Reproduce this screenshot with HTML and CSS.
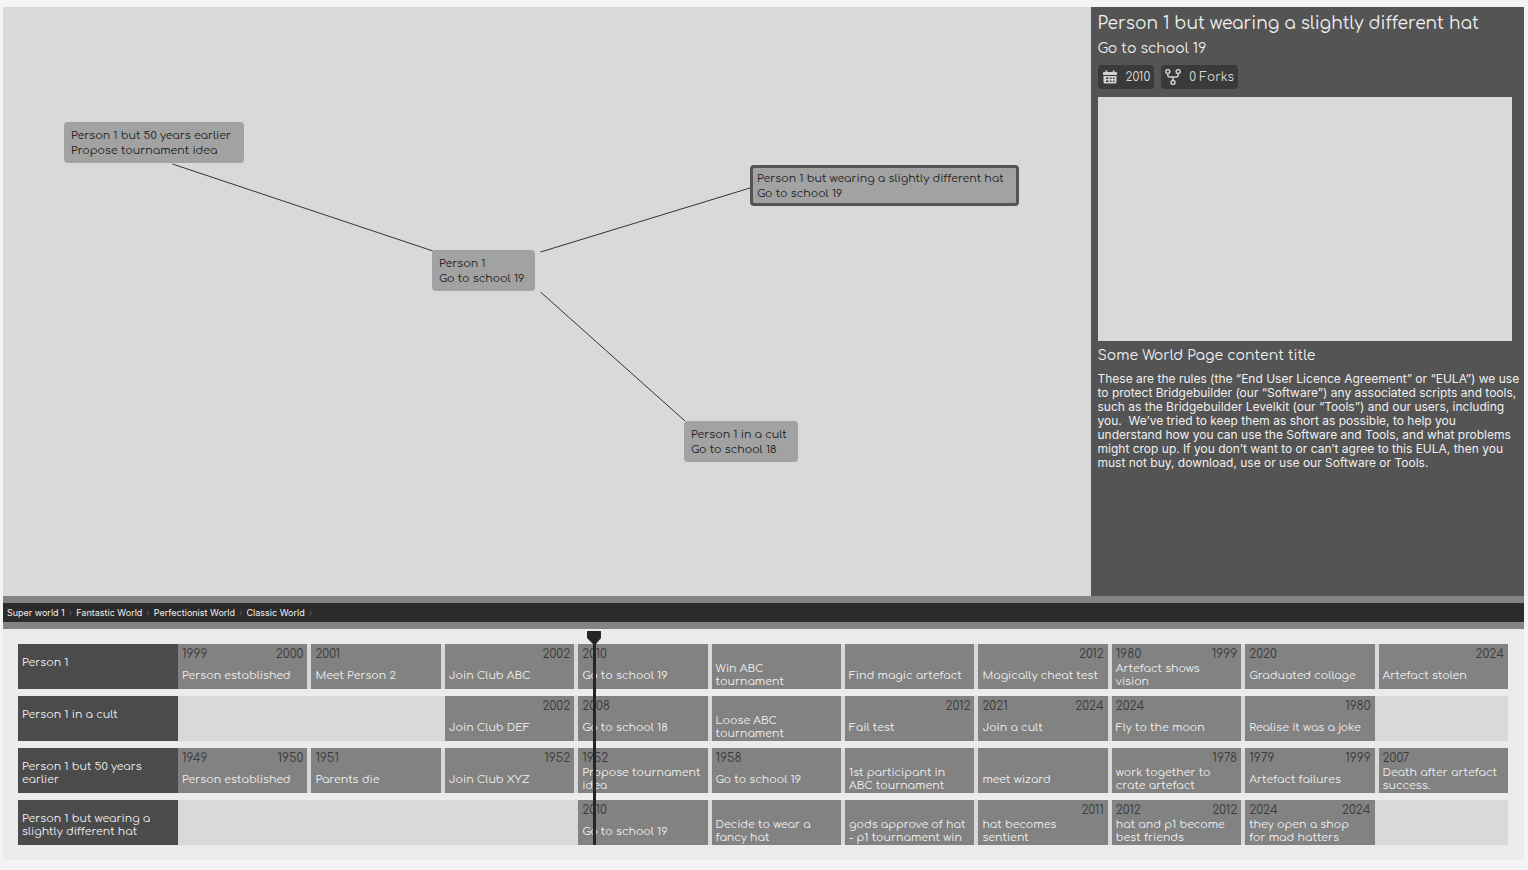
FILE: index.html
```html
<!DOCTYPE html>
<html lang="en">
<head>
<meta charset="utf-8">
<title>World timelines</title>
<link rel="stylesheet" href="styles.css">
</head>
<body>
<div class="app">
  <div class="workspace">
    <main class="canvas">
      <svg class="edges" aria-hidden="true">
        <path d="M169.500 157 430 244M537.500 245 747 181M537.500 285 682 414"/>
      </svg>
      <button class="node node-earlier">Person 1 but 50 years earlier<br>Propose tournament idea</button>
      <button class="node node-main">Person 1<br>Go to school 19</button>
      <button class="node node-hat selected">Person 1 but wearing a slightly different hat<br>Go to school 19</button>
      <button class="node node-cult">Person 1 in a cult<br>Go to school 18</button>
    </main>
    <aside class="panel">
      <h1 class="panel-title">Person 1 but wearing a slightly different hat</h1>
      <p class="panel-event">Go to school 19</p>
      <div class="badges">
        <span class="badge">
          <svg class="icon" viewBox="0 0 16 16" aria-hidden="true">
            <path d="M1 6V4Q1 3 2 3H3.500V1.500H5.200V3H10.800V1.500H12.500V3H14Q15 3 15 4V6Z" fill="#d0d0d0"/>
            <path fill-rule="evenodd" d="M1.500 7H14.500V13Q14.500 14.500 13 14.500H3Q1.500 14.500 1.500 13ZM4 8.500V10H6.500V8.500ZM8 8.500V10H9.500V8.500ZM11 8.500V10H12.500V8.500ZM4 11.500V13H6.500V11.500ZM8 11.500V13H9.500V11.500ZM11 11.500V13H12.500V11.500Z" fill="#d0d0d0"/>
          </svg>
          2010
        </span>
        <span class="badge">
          <svg class="icon" viewBox="0 0 16 16" fill="none" stroke="#d0d0d0" stroke-width="1.500" aria-hidden="true">
            <circle cx="2.800" cy="2.600" r="2"/><circle cx="13.200" cy="2.600" r="2"/><circle cx="8" cy="13.500" r="2"/>
            <path d="M2.800 4.600V6Q2.800 8 4.800 8H11.200Q13.200 8 13.200 6V4.600M8 8V11.500"/>
          </svg>
          0 Forks
        </span>
      </div>
      <div class="preview"></div>
      <h2 class="content-title">Some World Page content title</h2>
      <p class="content-text">These are the rules (the “End User Licence Agreement” or “EULA”) we use<br>to protect Bridgebuilder (our “Software”) any associated scripts and tools,<br>such as the Bridgebuilder Levelkit (our “Tools”) and our users, including<br>you.&nbsp; We’ve tried to keep them as short as possible, to help you<br>understand how you can use the Software and Tools, and what problems<br>might crop up. If you don’t want to or can’t agree to this EULA, then you<br>must not buy, download, use or use our Software or Tools.</p>
    </aside>
  </div>
  <nav class="crumbs" aria-label="Worlds">
    <a class="crumb" href="#">Super world 1</a><span class="sep">›</span>
    <a class="crumb" href="#">Fantastic World</a><span class="sep">›</span>
    <a class="crumb" href="#">Perfectionist World</a><span class="sep">›</span>
    <a class="crumb" href="#">Classic World</a><span class="sep">›</span>
  </nav>
  <section class="timeline">
    <div class="row">
      <div class="label">Person 1</div>
      <div class="track">
        <div class="event"><div class="years"><span>1999</span><span>2000</span></div><div class="name">Person established</div></div>
        <div class="event"><div class="years"><span>2001</span></div><div class="name">Meet Person 2</div></div>
        <div class="event"><div class="years end"><span>2002</span></div><div class="name">Join Club ABC</div></div>
        <div class="event"><div class="years"><span>2010</span></div><div class="name">Go to school 19</div></div>
        <div class="event"><div class="years"></div><div class="name">Win ABC<br>tournament</div></div>
        <div class="event"><div class="years"></div><div class="name">Find magic artefact</div></div>
        <div class="event"><div class="years end"><span>2012</span></div><div class="name">Magically cheat test</div></div>
        <div class="event"><div class="years"><span>1980</span><span>1999</span></div><div class="name">Artefact shows<br>vision</div></div>
        <div class="event"><div class="years"><span>2020</span></div><div class="name">Graduated collage</div></div>
        <div class="event"><div class="years end"><span>2024</span></div><div class="name">Artefact stolen</div></div>
      </div>
    </div>
    <div class="row">
      <div class="label">Person 1 in a cult</div>
      <div class="track">
        <div class="event from-3"><div class="years end"><span>2002</span></div><div class="name">Join Club DEF</div></div>
        <div class="event"><div class="years"><span>2008</span></div><div class="name">Go to school 18</div></div>
        <div class="event"><div class="years"></div><div class="name">Loose ABC<br>tournament</div></div>
        <div class="event"><div class="years end"><span>2012</span></div><div class="name">Fail test</div></div>
        <div class="event"><div class="years"><span>2021</span><span>2024</span></div><div class="name">Join a cult</div></div>
        <div class="event"><div class="years"><span>2024</span></div><div class="name">Fly to the moon</div></div>
        <div class="event"><div class="years end"><span>1980</span></div><div class="name">Realise it was a joke</div></div>
      </div>
    </div>
    <div class="row">
      <div class="label">Person 1 but 50 years<br>earlier</div>
      <div class="track">
        <div class="event"><div class="years"><span>1949</span><span>1950</span></div><div class="name">Person established</div></div>
        <div class="event"><div class="years"><span>1951</span></div><div class="name">Parents die</div></div>
        <div class="event"><div class="years end"><span>1952</span></div><div class="name">Join Club XYZ</div></div>
        <div class="event"><div class="years"><span>1952</span></div><div class="name">Propose tournament<br>idea</div></div>
        <div class="event"><div class="years"><span>1958</span></div><div class="name">Go to school 19</div></div>
        <div class="event"><div class="years"></div><div class="name">1st participant in<br>ABC tournament</div></div>
        <div class="event"><div class="years"></div><div class="name">meet wizard</div></div>
        <div class="event"><div class="years end"><span>1978</span></div><div class="name">work together to<br>crate artefact</div></div>
        <div class="event"><div class="years"><span>1979</span><span>1999</span></div><div class="name">Artefact failures</div></div>
        <div class="event"><div class="years"><span>2007</span></div><div class="name">Death after artefact<br>success.</div></div>
      </div>
    </div>
    <div class="row">
      <div class="label">Person 1 but wearing a<br>slightly different hat</div>
      <div class="track">
        <div class="event from-4"><div class="years"><span>2010</span></div><div class="name">Go to school 19</div></div>
        <div class="event"><div class="years"></div><div class="name">Decide to wear a<br>fancy hat</div></div>
        <div class="event"><div class="years"></div><div class="name">gods approve of hat<br>- p1 tournament win</div></div>
        <div class="event"><div class="years end"><span>2011</span></div><div class="name">hat becomes<br>sentient</div></div>
        <div class="event"><div class="years"><span>2012</span><span>2012</span></div><div class="name">hat and p1 become<br>best friends</div></div>
        <div class="event"><div class="years"><span>2024</span><span>2024</span></div><div class="name">they open a shop<br>for mad hatters</div></div>
      </div>
    </div>
    <div class="playhead"></div>
  </section>
</div>
</body>
</html>
```
FILE: styles.css
```css
* { box-sizing: border-box; }

body {
  margin: 0;
  background: #f4f4f4;
  font-family: Comfortaa, Lato, sans-serif;
  font-size: 11px;
  color: #f0f0f0;
}

h1, h2, p { margin: 0; font-weight: 400; }

.app {
  display: flex;
  flex-direction: column;
  min-height: 100vh;
  padding: 7px 4px 10px 3px;
}

.workspace { flex: 1; display: flex; }

.canvas {
  position: relative;
  flex: 1;
  overflow: hidden;
  background: #d9d9d9;
}

.edges {
  position: absolute;
  inset: 0;
  width: 100%;
  height: 100%;
  fill: none;
  stroke: #333;
  stroke-width: 1;
}

.node {
  position: absolute;
  height: 41px;
  padding: 0 7px;
  border: 0;
  border-radius: 4px;
  background: #a2a2a2;
  color: #1c1c1c;
  font: inherit;
  line-height: 15px;
  text-align: left;
  white-space: nowrap;
}

.node.selected {
  padding: 0 4px;
  border: 3px solid #545454;
}

.node-earlier { left: 61px; top: 115px; width: 180px; }
.node-main { left: 429px; top: 243px; width: 103px; }
.node-hat { left: 747px; top: 158px; width: 269px; }
.node-cult { left: 681px; top: 414px; width: 114px; }

.panel {
  flex: 0 0 28.5%;
  padding: 4px 4px 12px 7px;
  background: #545454;
}

.panel-title { font-size: 17px; line-height: 26px; }
.panel-event { font-size: 14px; line-height: 24px; }

.badges { display: flex; gap: 7px; margin-top: 4px; }

.badge {
  display: flex;
  align-items: center;
  gap: 8px;
  height: 24px;
  padding: 0 4px;
  border-radius: 4px;
  background: #3a3a3a;
  color: #d9d9d9;
  font-size: 12px;
}

.icon { width: 16px; height: 16px; }

.preview {
  height: 244px;
  margin: 8px 8px 0 0;
  background: #d9d9d9;
}

.content-title { margin-top: 4px; font-size: 14px; line-height: 22px; }

.content-text {
  margin-top: 5px;
  font-family: Inter, sans-serif;
  font-size: 12px;
  line-height: 14px;
}

.crumbs {
  display: flex;
  align-items: center;
  gap: 4px;
  height: 33px;
  padding: 0 4px;
  border: solid #848484;
  border-width: 7px 0;
  background: #2b2b2b;
  font-family: Inter, sans-serif;
  font-size: 9px;
}

.crumb { color: #f0f0f0; text-decoration: none; }
.sep { color: #666; }

.timeline {
  position: relative;
  display: flex;
  flex-direction: column;
  gap: 7px;
  padding: 15px 16px 15px 15px;
  background: #ebebeb;
}

.row { display: flex; height: 45px; }

.label {
  flex: 0 0 160px;
  padding: 12px 4px 0;
  background: #4b4b4b;
  line-height: 13px;
}

.track {
  flex: 1;
  display: grid;
  grid-template-columns: repeat(10, minmax(0, 1fr));
  gap: 4px;
  background: #d9d9d9;
}

.event {
  padding: 2px 4px 1px;
  background: #828282;
  line-height: 13px;
}

.from-3 { grid-column-start: 3; }
.from-4 { grid-column-start: 4; }

.years {
  display: flex;
  justify-content: space-between;
  height: 16px;
  color: #3a3a3a;
  font-size: 12px;
  line-height: 16px;
}

.years.end { justify-content: flex-end; }

.name {
  display: flex;
  align-items: center;
  height: 26px;
  white-space: nowrap;
}

.playhead {
  position: absolute;
  top: 2px;
  bottom: 15px;
  left: 584px;
  width: 14px;
  background: #252525;
  clip-path: polygon(0 0, 14px 0, 14px 7px, 9px 13px, 9px 100%, 6px 100%, 6px 13px, 0 7px);
}
```
